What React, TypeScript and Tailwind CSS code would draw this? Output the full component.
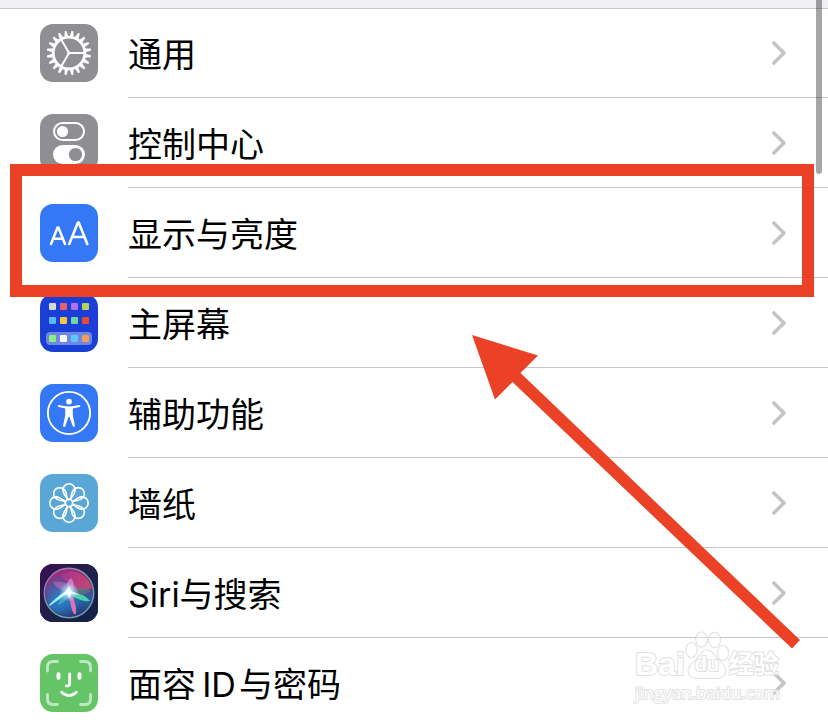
import type { ReactNode } from "react";
import clsx from "clsx";

type Item = {
  id: string;
  label: string;
  bg: string;
  icon: ReactNode;
};

const TWENTY = Array.from({ length: 20 }, (_, i) => i * 18);
const EIGHT = Array.from({ length: 8 }, (_, i) => i * 45);

const APP_COLORS = [
  ["#d9d9d3", "#e9606a", "#b070f0", "#b8d056"],
  ["#5ab8f8", "#fac43c", "#6fd8a4", "#ea4a34"],
  ["#88f07c", "#ffffff", "#5cc8fa", "#f2a055"],
];
const APP_ROWS = [9, 23, 41];

function GearIcon() {
  return (
    <svg viewBox="0 0 58 58" className="size-full">
      <g transform="translate(29 29)" fill="none" stroke="#fff">
        <circle r="15.8" strokeWidth="2.8" />
        {TWENTY.map((a) => (
          <path
            key={a}
            d="M-1.9 -16.5L-1 -22.2H1L1.9 -16.5Z"
            fill="#fff"
            stroke="none"
            transform={`rotate(${a + 9})`}
          />
        ))}
        <path d="M0 0H15M0 0L-7.5 -13M0 0L-7.5 13" strokeWidth="2" />
        <circle r="1.6" fill="#fff" stroke="none" />
      </g>
    </svg>
  );
}

function ControlIcon() {
  return (
    <svg viewBox="0 0 58 58" className="size-full">
      <rect x="14" y="9" width="30" height="17" rx="8.5" fill="none" stroke="#fff" strokeWidth="2" />
      <circle cx="22.5" cy="17.5" r="5.6" fill="#fff" />
      <rect x="13" y="31" width="32" height="19" rx="9.5" fill="#fff" />
      <circle cx="35.5" cy="40.5" r="6.6" fill="#8e8e93" />
    </svg>
  );
}

function DisplayIcon() {
  return (
    <svg viewBox="0 0 58 58" className="size-full" fill="none" stroke="#fff" strokeLinecap="round" strokeLinejoin="round">
      <path d="M11 40L17.6 23.5H18.4L25 40M13.5 34.8H22.5" strokeWidth="2.5" />
      <path d="M29.3 40L37.9 18.5H38.7L47.3 40M32.5 33H44" strokeWidth="2.6" />
    </svg>
  );
}

function HomeScreenIcon() {
  return (
    <svg viewBox="0 0 58 58" className="size-full">
      <rect x="6" y="38" width="46" height="13" rx="4" fill="#6f87e2" />
      {APP_COLORS.map((row, r) =>
        row.map((color, c) => (
          <rect key={`${r}-${c}`} x={9 + c * 11} y={APP_ROWS[r]} width="7" height="7" rx="1.2" fill={color} />
        ))
      )}
    </svg>
  );
}

function AccessibilityIcon() {
  return (
    <svg viewBox="0 0 58 58" className="size-full">
      <circle cx="29" cy="29" r="21.1" fill="none" stroke="#fff" strokeWidth="1.9" />
      <circle cx="29" cy="17.6" r="2.9" fill="#fff" />
      <path
        d="M18.9 21.1Q24 22.4 29 22.4T39.1 21.1Q40.3 21 40.3 22Q40.3 22.8 39.4 23L32.8 24.4V31.3L34.9 41.6Q35 42.8 34 43Q33.1 43.1 32.7 42L29.5 33H28.5L25.3 42Q24.9 43.1 24 43Q23 42.8 23.1 41.6L25.2 31.3V24.4L18.6 23Q17.7 22.8 17.7 22Q17.7 21 18.9 21.1Z"
        fill="#fff"
      />
    </svg>
  );
}

function WallpaperIcon() {
  return (
    <svg viewBox="0 0 58 58" className="size-full">
      <g transform="translate(29 29)" fill="none" stroke="#fff" strokeWidth="1.6">
        <circle r="3.6" />
        {EIGHT.map((a) => (
          <path
            key={a}
            d="M-0.8 -3.6C-3.5 -6.5 -6.1 -9.5 -6.1 -13.1A6.1 6.1 0 0 1 6.1 -13.1C6.1 -9.5 3.5 -6.5 0.8 -3.6"
            transform={`rotate(${a})`}
          />
        ))}
      </g>
    </svg>
  );
}

function SiriIcon() {
  return (
    <svg viewBox="0 0 58 58" className="size-full">
      <defs>
        <linearGradient id="siri-bg" x1="0" y1="0" x2="1" y2="1">
          <stop offset="0" stopColor="#3a1052" />
          <stop offset="0.5" stopColor="#20204a" />
          <stop offset="1" stopColor="#0f2347" />
        </linearGradient>
        <linearGradient id="siri-orb" x1="0.4" y1="0" x2="0.6" y2="1">
          <stop offset="0" stopColor="#a82a7c" />
          <stop offset="0.45" stopColor="#5c3a80" />
          <stop offset="0.7" stopColor="#2862a4" />
          <stop offset="1" stopColor="#26336e" />
        </linearGradient>
        <linearGradient id="siri-ring" x1="0" y1="0" x2="1" y2="1">
          <stop offset="0" stopColor="#a76cb8" />
          <stop offset="0.6" stopColor="#72a69c" />
          <stop offset="1" stopColor="#7f91bd" />
        </linearGradient>
        <linearGradient id="siri-red" x1="0" y1="0" x2="1" y2="0.5">
          <stop offset="0" stopColor="#a03694" />
          <stop offset="1" stopColor="#ef486f" />
        </linearGradient>
        <radialGradient id="siri-blue" cx="0.3" cy="0.6" r="0.5">
          <stop offset="0" stopColor="#2c86d2" stopOpacity="0.9" />
          <stop offset="1" stopColor="#2c86d2" stopOpacity="0" />
        </radialGradient>
        <radialGradient id="siri-glow">
          <stop offset="0" stopColor="#fff" />
          <stop offset="0.3" stopColor="#c4f7ff" stopOpacity="0.8" />
          <stop offset="1" stopColor="#8de3ff" stopOpacity="0" />
        </radialGradient>
      </defs>
      <rect width="58" height="58" fill="url(#siri-bg)" />
      <circle cx="29" cy="29" r="24.7" fill="url(#siri-orb)" stroke="url(#siri-ring)" strokeWidth="1.4" />
      <circle cx="29" cy="29" r="23" fill="url(#siri-blue)" />
      <path d="M20 12C31 3 48 9 52 24C44 28 35 28 29 27C29 20 26 15 20 12Z" fill="url(#siri-red)" opacity="0.7" />
      <path d="M13 18C25 17 34 21 40 29L29 28C22 27 16 24 13 18Z" fill="#d174bd" opacity="0.5" />
      <path d="M31 14C35 18 35 25 29 31C25 25 26 18 31 14Z" fill="#e49be5" opacity="0.6" />
      <path d="M28 27C35 27 44 30 50 37C42 38 35 34 29 29Z" fill="#50dfaa" opacity="0.9" />
      <path d="M29 28C38 23 46 23 51 27C45 32 37 32 29 29Z" fill="#527786" opacity="0.8" />
      <path d="M9 41C14 36 21 29 29 25L31 28C24 32 16 37 10 42Z" fill="#92f4f3" />
      <path d="M18 41C20 34 24 29 30 27C28 34 25 39 18 41Z" fill="#4bbcc8" opacity="0.65" />
      <path d="M29 27C34 33 37 43 36 50C34 52 32 47 31 42C30 36 28 31 29 27Z" fill="#ed72b8" opacity="0.9" />
      <circle cx="29" cy="28" r="10" fill="url(#siri-glow)" />
      <path d="M29 22L31 27L41 31L31 30L29 35L27 30L17 35L26 27Z" fill="#fff" opacity="0.8" />
    </svg>
  );
}

function FaceIcon() {
  return (
    <svg viewBox="0 0 58 58" className="size-full" fill="none" stroke="#fff" strokeLinecap="round">
      <path
        d="M7.5 17V13Q7.5 7.5 13 7.5H17.5M40.5 7.5H45Q50.5 7.5 50.5 13V17M50.5 40.5V45Q50.5 50.5 45 50.5H40.5M17.5 50.5H13Q7.5 50.5 7.5 45V40.5"
        strokeWidth="2.8"
        opacity="0.6"
      />
      <path d="M18.5 20.3V23.8M39.5 20.3V23.8" strokeWidth="4" />
      <path d="M29.7 20V29.5Q29.7 31.8 27.3 31.8H26.3M21.7 38.3Q29 45 36.3 38.3" strokeWidth="2.8" />
    </svg>
  );
}

function Chevron() {
  return (
    <svg viewBox="0 0 16 26" className="h-[26px] w-4 shrink-0" aria-hidden="true">
      <path d="M2.8 3L13 13L2.8 23" fill="none" stroke="#c4c4c6" strokeWidth="3.6" strokeLinecap="round" strokeLinejoin="round" />
    </svg>
  );
}

const items: Item[] = [
  { id: "general", label: "通用", bg: "bg-[#8e8e93]", icon: <GearIcon /> },
  { id: "control", label: "控制中心", bg: "bg-[#8e8e93]", icon: <ControlIcon /> },
  { id: "display", label: "显示与亮度", bg: "bg-[#3478f6]", icon: <DisplayIcon /> },
  { id: "home", label: "主屏幕", bg: "bg-[#1a3fd6]", icon: <HomeScreenIcon /> },
  { id: "accessibility", label: "辅助功能", bg: "bg-[#3478f6]", icon: <AccessibilityIcon /> },
  { id: "wallpaper", label: "墙纸", bg: "bg-[#59a7d7]", icon: <WallpaperIcon /> },
  { id: "siri", label: "Siri与搜索", bg: "bg-[#20204a]", icon: <SiriIcon /> },
  { id: "faceid", label: "面容\u2009ID\u200a与密码", bg: "bg-[#65c466]", icon: <FaceIcon /> },
];

function Row({ item }: { item: Item }) {
  return (
    <li>
      <a href={`#${item.id}`} className="flex h-[90px] items-center gap-[30px] pl-10">
        <span className={clsx("size-[58px] shrink-0 overflow-hidden rounded-[13px]", item.bg)}>
          {item.icon}
        </span>
        <span className="flex h-full flex-1 items-center justify-between border-b border-[#c6c6c8] pr-[41px]">
          <span className="pt-1">{item.label}</span>
          <Chevron />
        </span>
      </a>
    </li>
  );
}

function Watermark() {
  return (
    <div className="absolute top-[630px] right-[43px] w-[150px] whitespace-nowrap text-white opacity-75 [-webkit-text-stroke:2px_#d8d8d8] [paint-order:stroke_fill]">
      <div className="flex h-[50px] items-end font-['Liberation_Sans','Noto_Sans_CJK_SC',sans-serif] font-bold">
        <span className="text-[32px] leading-8">Bai</span>
        <span className="relative flex h-[50px] w-11 items-end justify-center">
          <svg viewBox="0 0 44 50" className="absolute inset-0 size-full" fill="#fff" fillOpacity="0.5" stroke="#d8d8d8" strokeWidth="1.5">
            <ellipse cx="6.5" cy="20" rx="5.5" ry="7.5" />
            <ellipse cx="16.5" cy="9.5" rx="5.5" ry="7.5" />
            <ellipse cx="29.5" cy="10" rx="6" ry="7.5" />
            <ellipse cx="38" cy="23" rx="5.5" ry="7.5" />
            <path d="M22 20C28 20 30 27 34 31C40 35 42 39 40 44C37 50 31 48 22 48S7 50 4 44C2 39 4 35 10 31C14 27 16 20 22 20Z" />
          </svg>
          <span className="relative text-xl leading-8">du</span>
        </span>
        <span className="text-[25px] leading-8">经验</span>
      </div>
      <div className="pt-[3px] font-['Open_Sans',sans-serif] text-[17px] leading-5">jingyan.baidu.com</div>
    </div>
  );
}

export default function App() {
  return (
    <main className="relative h-screen overflow-hidden bg-white font-[Inter,'Noto_Sans_CJK_SC',sans-serif] text-[34px] leading-[48px] text-black">
      <header className="h-2 bg-[#efeff4] shadow-[0_1px_0_#c6c6c8]" />
      <ul>
        {items.map((item) => (
          <Row key={item.id} item={item} />
        ))}
      </ul>

      <div className="absolute top-0 right-[6px] h-[174px] w-[6px] rounded-b-full bg-black/35" />
      <div className="absolute top-[164px] right-[14px] left-[10px] h-[133px] border-12 border-[#eb4126]" />
      <svg viewBox="0 0 328 314" className="absolute top-[335px] right-[28px] h-[314px] w-[328px]" aria-hidden="true">
        <path d="M0 0L66 20.5L48.5 38L328 305L320 313.5L40.5 47L23 64.5Z" fill="#eb4126" />
      </svg>
      <Watermark />
    </main>
  );
}
